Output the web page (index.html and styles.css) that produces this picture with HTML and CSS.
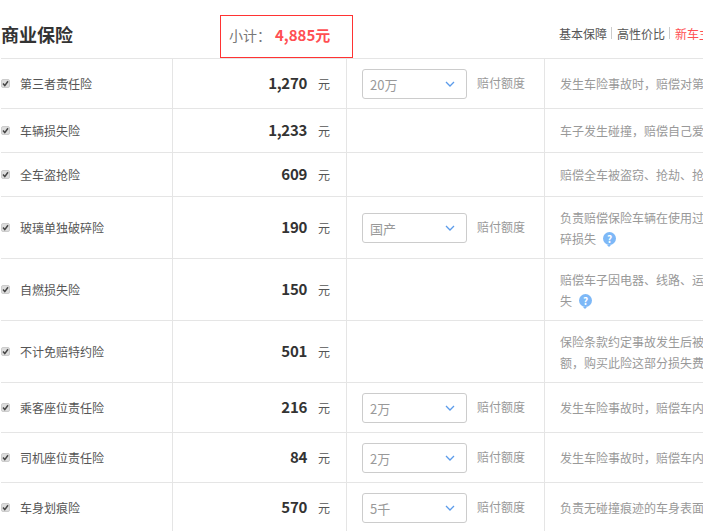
FILE: index.html
```html
<!doctype html>
<html lang="en">
  <head>
    <meta charset="UTF-8" />
    <title>商业保险</title>
    <link rel="stylesheet" href="styles.css">
  </head>
  <body>
    <div class="insurance">
      <!-- Header -->
      <div class="head">
        <h2>商业保险</h2>
        <div class="subtotal">
          <span class="subtotal-label">小计：</span>
          <span class="subtotal-value">4,885元</span>
        </div>
        <div class="plans">
          <span>基本保障</span>
          <i></i>
          <span>高性价比</span>
          <i></i>
          <span class="plan-new">新车主推荐</span>
        </div>
      </div>

      <!-- Rows -->
      <div class="row row-m">
        <div class="cell name"><span class="check"><svg width="7" height="7" viewBox="0 0 7 7"><path d="M1 3.5 L2.8 5.6 L6 1.2" /></svg></span>第三者责任险</div>
        <div class="cell price"><b>1,270</b><span>元</span></div>
        <div class="cell option">
          <div class="select">20万<svg width="10" height="6" viewBox="0 0 10 6"><path d="M1 1 L5 5 L9 1" /></svg></div>
          <span class="option-label">赔付额度</span>
        </div>
        <div class="cell desc"><p>发生车险事故时，赔偿对第三者造成的人身及财产损失</p></div>
      </div>

      <div class="row row-s">
        <div class="cell name"><span class="check"><svg width="7" height="7" viewBox="0 0 7 7"><path d="M1 3.5 L2.8 5.6 L6 1.2" /></svg></span>车辆损失险</div>
        <div class="cell price"><b>1,233</b><span>元</span></div>
        <div class="cell option"></div>
        <div class="cell desc"><p>车子发生碰撞，赔偿自己爱车损失的费用</p></div>
      </div>

      <div class="row row-s">
        <div class="cell name"><span class="check"><svg width="7" height="7" viewBox="0 0 7 7"><path d="M1 3.5 L2.8 5.6 L6 1.2" /></svg></span>全车盗抢险</div>
        <div class="cell price"><b>609</b><span>元</span></div>
        <div class="cell option"></div>
        <div class="cell desc"><p>赔偿全车被盗窃、抢劫、抢夺造成的车辆损失</p></div>
      </div>

      <div class="row row-l">
        <div class="cell name"><span class="check"><svg width="7" height="7" viewBox="0 0 7 7"><path d="M1 3.5 L2.8 5.6 L6 1.2" /></svg></span>玻璃单独破碎险</div>
        <div class="cell price"><b>190</b><span>元</span></div>
        <div class="cell option">
          <div class="select">国产<svg width="10" height="6" viewBox="0 0 10 6"><path d="M1 1 L5 5 L9 1" /></svg></div>
          <span class="option-label">赔付额度</span>
        </div>
        <div class="cell desc"><p>负责赔偿保险车辆在使用过程中，发生本车玻璃单独破</p><p>碎损失<span class="help">?</span></p></div>
      </div>

      <div class="row row-l">
        <div class="cell name"><span class="check"><svg width="7" height="7" viewBox="0 0 7 7"><path d="M1 3.5 L2.8 5.6 L6 1.2" /></svg></span>自燃损失险</div>
        <div class="cell price"><b>150</b><span>元</span></div>
        <div class="cell option"></div>
        <div class="cell desc"><p>赔偿车子因电器、线路、运载货物等自身原因起火的损</p><p>失<span class="help">?</span></p></div>
      </div>

      <div class="row row-l">
        <div class="cell name"><span class="check"><svg width="7" height="7" viewBox="0 0 7 7"><path d="M1 3.5 L2.8 5.6 L6 1.2" /></svg></span>不计免赔特约险</div>
        <div class="cell price"><b>501</b><span>元</span></div>
        <div class="cell option"></div>
        <div class="cell desc"><p>保险条款约定事故发生后被保险人需自行承担一定的金</p><p>额，购买此险这部分损失费用由保险公司赔偿</p></div>
      </div>

      <div class="row row-m">
        <div class="cell name"><span class="check"><svg width="7" height="7" viewBox="0 0 7 7"><path d="M1 3.5 L2.8 5.6 L6 1.2" /></svg></span>乘客座位责任险</div>
        <div class="cell price"><b>216</b><span>元</span></div>
        <div class="cell option">
          <div class="select">2万<svg width="10" height="6" viewBox="0 0 10 6"><path d="M1 1 L5 5 L9 1" /></svg></div>
          <span class="option-label">赔付额度</span>
        </div>
        <div class="cell desc"><p>发生车险事故时，赔偿车内乘客的人身伤亡</p></div>
      </div>

      <div class="row row-m">
        <div class="cell name"><span class="check"><svg width="7" height="7" viewBox="0 0 7 7"><path d="M1 3.5 L2.8 5.6 L6 1.2" /></svg></span>司机座位责任险</div>
        <div class="cell price"><b>84</b><span>元</span></div>
        <div class="cell option">
          <div class="select">2万<svg width="10" height="6" viewBox="0 0 10 6"><path d="M1 1 L5 5 L9 1" /></svg></div>
          <span class="option-label">赔付额度</span>
        </div>
        <div class="cell desc"><p>发生车险事故时，赔偿车内司机的人身伤亡</p></div>
      </div>

      <div class="row row-m">
        <div class="cell name"><span class="check"><svg width="7" height="7" viewBox="0 0 7 7"><path d="M1 3.5 L2.8 5.6 L6 1.2" /></svg></span>车身划痕险</div>
        <div class="cell price"><b>570</b><span>元</span></div>
        <div class="cell option">
          <div class="select">5千<svg width="10" height="6" viewBox="0 0 10 6"><path d="M1 1 L5 5 L9 1" /></svg></div>
          <span class="option-label">赔付额度</span>
        </div>
        <div class="cell desc"><p>负责无碰撞痕迹的车身表面油漆划伤的损失</p></div>
      </div>
    </div>
  </body>
</html>
```

FILE: styles.css
```css
/* Page is cut off by the window on the right and at the bottom */
html,
body {
  margin: 0;
  height: 531px;
  overflow: hidden;
  background-color: #fff;
}

body {
  padding-left: 1px;
  font-family: "Noto Sans CJK SC", "Noto Sans", sans-serif;
  font-size: 12px;
  color: #555;
}

.insurance {
  width: 760px;
}

/* Header */
.head {
  display: flex;
  align-items: flex-end;
  height: 58px;
  border-bottom: 1px solid #e5e5e5;
}

h2 {
  width: 219px;
  margin: 0 0 11px;
  font-size: 18px;
  font-weight: bold;
  line-height: 26px;
  color: #333;
}

.subtotal {
  display: flex;
  align-items: center;
  box-sizing: border-box;
  width: 133px;
  height: 43px;
  padding: 0 0 4px 8px;
  border: 1px solid #f33;
}

.subtotal-label {
  width: 46px;
  font-size: 14px;
  color: #777;
}

.subtotal-value {
  font-size: 15px;
  font-weight: bold;
  color: #ff4f53;
}

.plans {
  display: flex;
  align-items: center;
  height: 18px;
  margin: 0 0 16px 206px;
  color: #555;
}

.plans i {
  width: 1px;
  height: 12px;
  margin: 0 5px 0 4px;
  background-color: #ccc;
}

.plan-new {
  color: #ff4f53;
}

/* Rows */
.row {
  display: grid;
  grid-template-columns: 172px 174px 198px 1fr;
  border-bottom: 1px solid #e5e5e5;
}

.row-s {
  height: 43px;
}

.row-m {
  height: 49px;
}

.row-l {
  height: 61px;
}

.cell {
  display: flex;
  align-items: center;
  box-sizing: border-box;
  border-right: 1px solid #e5e5e5;
}

.check {
  display: flex;
  align-items: center;
  justify-content: center;
  box-sizing: border-box;
  width: 9px;
  height: 9px;
  margin-right: 10px;
  background-color: #ddd;
  border: 1px solid #ccc;
  border-radius: 2px;
}

.check path {
  fill: none;
  stroke: #444;
  stroke-width: 1.5;
}

.name {
  padding-bottom: 1px;
}

.price {
  justify-content: flex-end;
  padding: 0 16px 1px 0;
}

.price b {
  margin: 0 11px 2px 0;
  font-size: 15px;
  letter-spacing: -0.3px;
  color: #333;
}

.option {
  padding-left: 15px;
}

.select {
  display: flex;
  align-items: center;
  justify-content: space-between;
  box-sizing: border-box;
  width: 105px;
  height: 30px;
  padding: 1px 11px 0 7px;
  border: 1px solid #ccc;
  border-radius: 3px;
  font-size: 13px;
  color: #999;
}

.select path {
  fill: none;
  stroke: #5b9bea;
  stroke-width: 1.3;
}

.option-label {
  margin: 0 0 3px 10px;
  color: #999;
}

.desc {
  display: block;
  align-self: center;
  padding-left: 15px;
  border-right: none;
  color: #999;
  white-space: nowrap;
}

.desc p {
  display: flex;
  align-items: center;
  height: 21px;
  margin: 0;
}

/* Help mark: round badge with a small tip below */
.help {
  position: relative;
  width: 13px;
  height: 13px;
  margin: 1px 0 0 7px;
  border-radius: 50%;
  background-color: #7db8f7;
  font-size: 10px;
  font-weight: bold;
  line-height: 13px;
  text-align: center;
  color: #fff;
}

.help::after {
  content: "";
  position: absolute;
  left: 4px;
  bottom: -2px;
  border: 2.5px solid transparent;
  border-bottom: none;
  border-top-color: #7db8f7;
}
```
